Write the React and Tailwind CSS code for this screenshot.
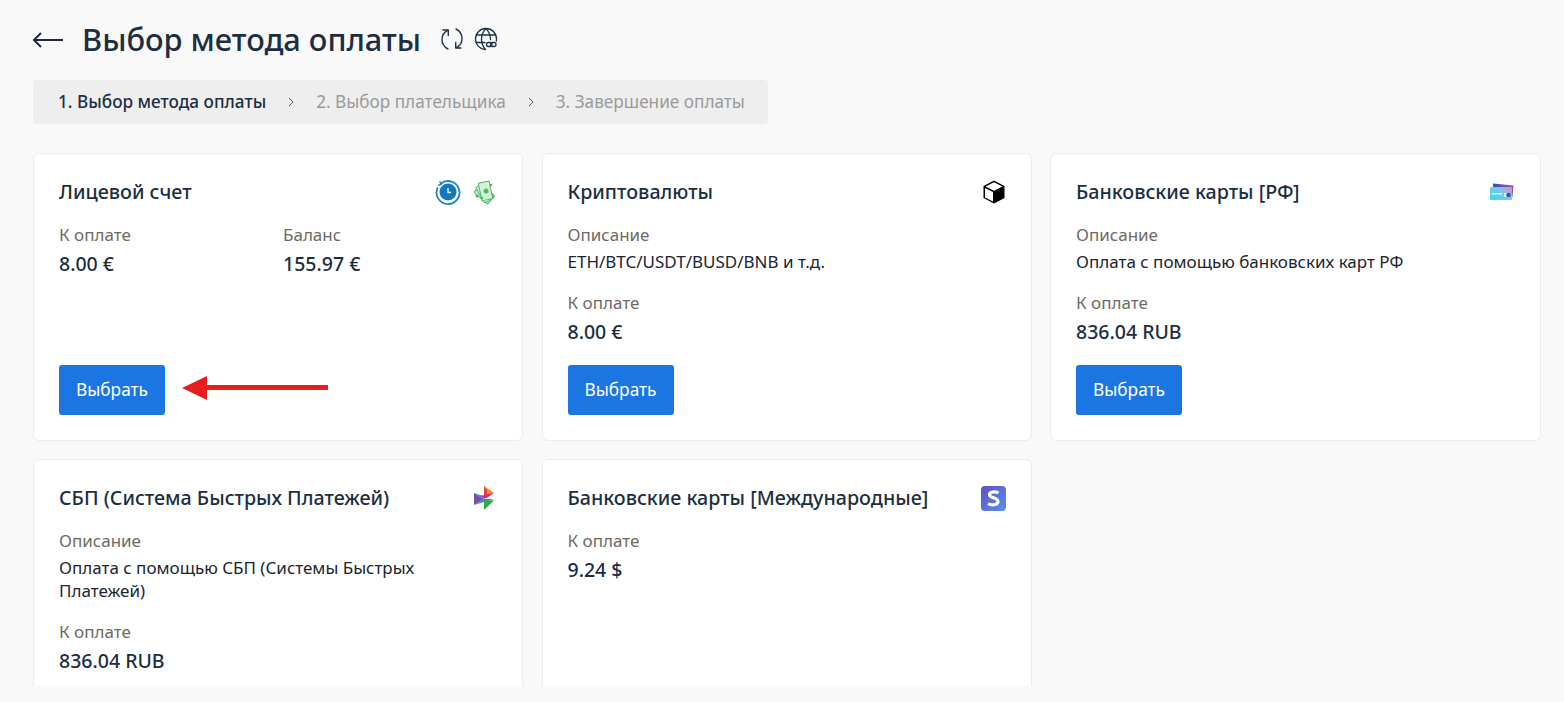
import React from "react";

const Arrow = () => (
  <svg width="32" height="16" viewBox="0 0 32 16" fill="none" stroke="#1e293b" strokeWidth="2" className="-ml-px">
    <path d="M31 8H2M9 1L2 8l7 7" />
  </svg>
);
const Refresh = () => (
  <svg width="24" height="24" viewBox="0 0 24 24" fill="none" stroke="#1f3247" strokeWidth="1.400" strokeLinecap="round" strokeLinejoin="round">
    <path d="M8 22C4.300 20.200 2 16.500 2 12.300 2 8.500 4.300 5 7.800 3.300" />
    <path d="M8.300 8.500V3H3" />
    <path d="M16 2c3.700 1.800 6 5.500 6 9.700 0 3.800-2.300 7.300-5.800 9" />
    <path d="M15.700 15.500V21H21" />
  </svg>
);
const Globe = () => (
  <svg width="24" height="24" viewBox="0 0 24 24" fill="none" stroke="#1f3247" strokeWidth="1.300" strokeLinecap="round">
    <path d="M11 22.500C5.500 22 1.500 17.500 1.500 12 1.500 6.200 6.200 1.500 12 1.500S22.500 6.200 22.500 12c0 .8-.1 1.500-.2 2.200" />
    <path d="M12 1.500C9 4.500 7.500 8 7.500 12s1.500 7.500 4 10.500M12 1.500c3 3 4.500 6.500 4.500 11" />
    <path d="M2.700 8h18.600M2 15.500h9" />
    <rect x="12.500" y="15.500" width="5.500" height="4" rx="2" />
    <rect x="16.500" y="15.500" width="5.500" height="4" rx="2" />
  </svg>
);
const Chevron = () => (
  <svg width="8" height="10" viewBox="0 0 8 10" fill="none" stroke="#555" strokeWidth="1" className="shrink-0">
    <path d="M2 1l4 4-4 4" />
  </svg>
);
const ClockIcon = () => (
  <svg width="26" height="26" viewBox="0 0 26 26" fill="none">
    <path d="M6 4.500A11.500 11.500 0 1 1 2.500 9" stroke="#1b87c9" strokeWidth="1.800" strokeLinecap="round" />
    <path d="M4.500 2.500L6.500 5 3.500 6.500" stroke="#1b87c9" strokeWidth="1.500" />
    <circle cx="13" cy="13" r="8.500" fill="#0f79c4" />
    <path d="M13 9v4.500h3" stroke="#fff" strokeWidth="1.300" />
  </svg>
);
const MoneyIcon = () => (
  <svg width="26" height="26" viewBox="0 0 26 26">
    <g fill="#d5f0da" stroke="#53b76f" strokeWidth="1">
      <rect x="7" y="6" width="11" height="18" rx="1" transform="rotate(-48 13 14)" />
      <rect x="8" y="5" width="11" height="18" rx="1" transform="rotate(-30 13 13)" />
      <rect x="9" y="3" width="11" height="18" rx="1" transform="rotate(-12 14 12)" />
    </g>
    <circle cx="15" cy="12" r="2.500" fill="#4fb56c" />
    <circle cx="6" cy="17" r="1.500" fill="#4fb56c" />
    <circle cx="20" cy="6" r="1.300" fill="#4fb56c" />
    <circle cx="11" cy="19" r="1.300" fill="#4fb56c" />
  </svg>
);
const CubeIcon = () => (
  <svg width="24" height="24" viewBox="0 0 24 24">
    <path d="M12 0.500L22.500 6v12L12 23.500 1.500 18V6z" fill="#000" />
    <path d="M12 2.300L20.500 6.500 12 10.800 3.500 6.500z" fill="#fff" />
    <path d="M3 8l8 4V21.500l-8-4z" fill="#fff" />
  </svg>
);
const CardIcon = () => (
  <svg width="26" height="20" viewBox="0 0 26 20">
    <defs>
      <linearGradient id="cardA" x1="0" y1="0" x2="1" y2="0">
        <stop offset="0" stopColor="#3a4cb8" />
        <stop offset="1" stopColor="#7d5fb8" />
      </linearGradient>
      <linearGradient id="cardB" x1="0" y1="1" x2="1" y2="0">
        <stop offset="0" stopColor="#27e6ec" />
        <stop offset="0.6" stopColor="#7cc7e6" />
        <stop offset="1" stopColor="#f080b8" />
      </linearGradient>
    </defs>
    <path d="M4 1.500L24.500 3.500 23.500 15 4 15z" fill="url(#cardA)" />
    <rect x="1" y="5" width="22" height="13" rx="1" fill="url(#cardB)" />
    <rect x="3" y="11" width="10" height="1.500" fill="#d8fbfb" />
    <circle cx="17" cy="13" r="2.300" fill="#fff" opacity="0.8" />
    <circle cx="19.500" cy="13" r="2.300" fill="#3d4fb5" />
  </svg>
);
const SbpIcon = () => (
  <svg width="24" height="26" viewBox="1 0 24 26">
    <path d="M12 1L22 8l-10 5z" fill="#f58a1f" />
    <path d="M12 1v12l3-1.500V5.500z" fill="#e8443a" />
    <path d="M2 8L12 14 2 20z" fill="#7a4fa8" />
    <path d="M2 8l10 6 3-1.700z" fill="#1f9be0" />
    <path d="M2 20l10-6 10 0z" fill="#1f6fd6" opacity="0.85" />
    <path d="M12 15l10 .5L12 25z" fill="#2ea84a" />
    <path d="M8 11L22 8l-8 5.500z" fill="#e0257d" />
  </svg>
);
const StripeIcon = () => (
  <div className="flex h-[25px] w-[25px] items-center justify-center rounded-[4px] bg-gradient-to-br from-[#5f4fc0] to-[#4f93ee]">
    <svg width="13" height="17" viewBox="0 0 13 17" fill="none" stroke="#fff" strokeWidth="3.200">
      <path d="M11.500 3C9 1.500 2.500 1.300 2.500 4.800c0 3.700 8.500 2.300 8.500 6.800 0 4-7 3.700-10 2" />
    </svg>
  </div>
);

const Field = ({ label, value, className = "" }) => (
  <div className={className}>
    <div className="text-[17px] leading-[24px] text-[#6f6a66]">{label}</div>
    <div className="mt-[5px] text-[19.500px] font-medium leading-[24px] text-[#1c2f42]">{value}</div>
  </div>
);
const Desc = ({ children }) => (
  <div className="mb-[18px]">
    <div className="text-[17px] leading-[24px] text-[#6f6a66]">Описание</div>
    <div className="mt-[3px] text-[17px] leading-[23px] text-[#1c2530]">{children}</div>
  </div>
);
const Choose = () => (
  <button className="h-[50px] w-[106px] rounded-[3px] bg-[#1b76e4] text-[17.300px] text-white">Выбрать</button>
);
const Card = ({ title, icons, children, button = true }) => (
  <div className="flex flex-col rounded-[6px] border border-[#ececec] bg-white px-[25px] pt-[25px] pb-[25px]">
    <div className="mb-[18px] flex h-[26px] items-center justify-between">
      <div className="text-[19.700px] font-medium text-[#1c2f42]">{title}</div>
      <div className="flex items-center gap-[10px]">{icons}</div>
    </div>
    <div className="flex-1">{children}</div>
    {button && <div className="mt-[21px]"><Choose /></div>}
  </div>
);

export default function App() {
  return (
    <div className="h-[702px] overflow-hidden bg-[#f9f9f9] font-['Noto_Sans',sans-serif]">
      <div className="h-[686px] overflow-hidden pl-[33px] pr-[23px] pt-[20px]">
        <div className="flex h-[40px] items-center">
          <Arrow />
          <h1 className="ml-[18px] -translate-y-px text-[30.800px] font-medium leading-[40px] text-[#1c2f42]">Выбор метода оплаты</h1>
          <div className="ml-[19px] -translate-y-px flex items-center gap-[10px]">
            <Refresh />
            <Globe />
          </div>
        </div>
        <div className="mt-[20px] flex h-[44px] w-[735px] items-center gap-[21px] whitespace-nowrap rounded-[4px] bg-[#eeeeee] px-[25px] text-[17.200px]">
          <span className="font-medium text-[#1c2f42]">1. Выбор метода оплаты</span>
          <Chevron />
          <span className="text-[#9a9a9a]">2. Выбор плательщика</span>
          <Chevron />
          <span className="text-[#9a9a9a]">3. Завершение оплаты</span>
        </div>
        <div className="mt-[29px] grid grid-cols-[490px_490px_491px] gap-x-[18.500px] gap-y-[18px]">
          <Card title="Лицевой счет" icons={<><ClockIcon /><MoneyIcon /></>}>
            <div className="relative flex">
              <Field label="К оплате" value="8.00 €" className="w-[224px]" />
              <Field label="Баланс" value="155.97 €" />
              <div className="absolute left-[123px] top-[152px]">
                <svg width="146" height="26" viewBox="0 0 146 26">
                  <path d="M0 13L25 1v9h121v5H25v10z" fill="#e81e1e" />
                </svg>
              </div>
            </div>
          </Card>
          <Card title="Криптовалюты" icons={<CubeIcon />}>
            <Desc>ETH/BTC/USDT/BUSD/BNB и т.д.</Desc>
            <Field label="К оплате" value="8.00 €" />
          </Card>
          <Card title="Банковские карты [РФ]" icons={<CardIcon />}>
            <Desc>Оплата с помощью банковских карт РФ</Desc>
            <Field label="К оплате" value="836.04 RUB" />
          </Card>
          <Card title="СБП (Система Быстрых Платежей)" icons={<SbpIcon />} button={false}>
            <Desc>Оплата с помощью СБП (Системы Быстрых Платежей)</Desc>
            <Field label="К оплате" value="836.04 RUB" />
          </Card>
          <Card title="Банковские карты [Международные]" icons={<StripeIcon />} button={false}>
            <Field label="К оплате" value="9.24 $" />
          </Card>
        </div>
      </div>
    </div>
  );
}
